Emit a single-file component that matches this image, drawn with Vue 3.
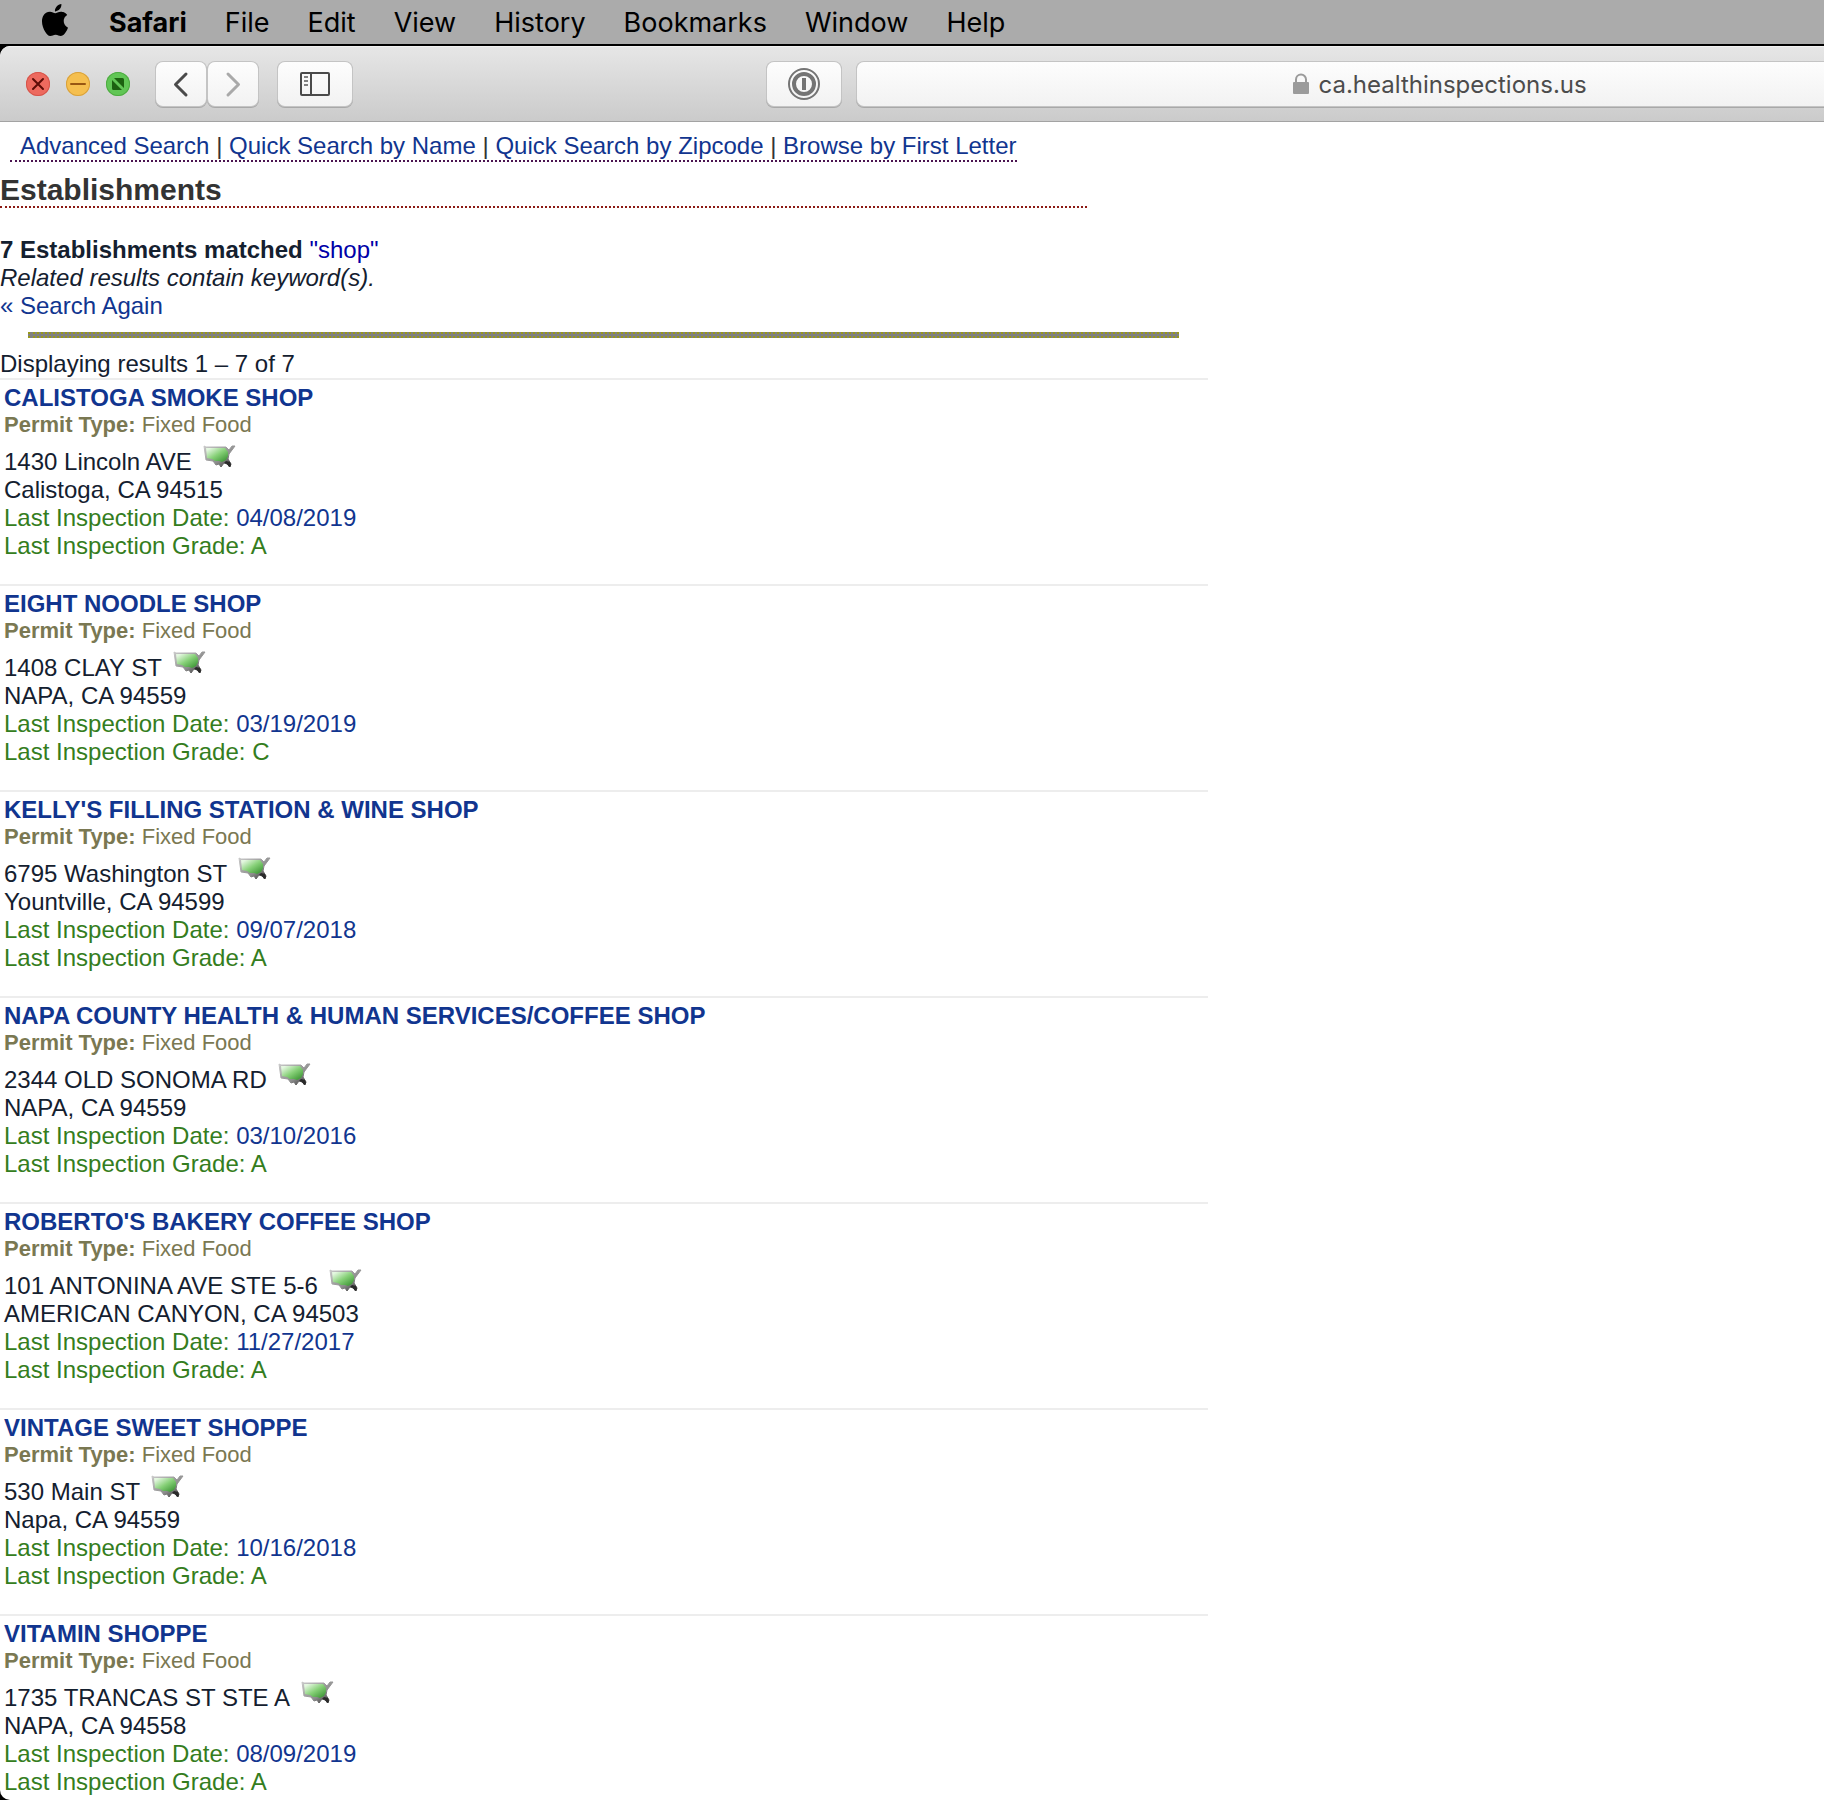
<script setup>
const menus = ['File', 'Edit', 'View', 'History', 'Bookmarks', 'Window', 'Help']

const searches = [
  'Advanced Search',
  'Quick Search by Name',
  'Quick Search by Zipcode',
  'Browse by First Letter',
]

const establishments = [
  { name: 'CALISTOGA SMOKE SHOP', street: '1430 Lincoln AVE', city: 'Calistoga, CA 94515', date: '04/08/2019', grade: 'A' },
  { name: 'EIGHT NOODLE SHOP', street: '1408 CLAY ST', city: 'NAPA, CA 94559', date: '03/19/2019', grade: 'C' },
  { name: "KELLY'S FILLING STATION & WINE SHOP", street: '6795 Washington ST', city: 'Yountville, CA 94599', date: '09/07/2018', grade: 'A' },
  { name: 'NAPA COUNTY HEALTH & HUMAN SERVICES/COFFEE SHOP', street: '2344 OLD SONOMA RD', city: 'NAPA, CA 94559', date: '03/10/2016', grade: 'A' },
  { name: "ROBERTO'S BAKERY COFFEE SHOP", street: '101 ANTONINA AVE STE 5-6', city: 'AMERICAN CANYON, CA 94503', date: '11/27/2017', grade: 'A' },
  { name: 'VINTAGE SWEET SHOPPE', street: '530 Main ST', city: 'Napa, CA 94559', date: '10/16/2018', grade: 'A' },
  { name: 'VITAMIN SHOPPE', street: '1735 TRANCAS ST STE A', city: 'NAPA, CA 94558', date: '08/09/2019', grade: 'A' },
]
</script>

<template>
  <div class="desktop">
    <header class="menubar">
      <button class="menu apple" aria-label="Apple menu">
        <svg width="32" height="32" viewBox="0 0 24 24" aria-hidden="true">
          <path d="M12.152 6.896c-.948 0-2.415-1.078-3.96-1.04-2.04.027-3.91 1.183-4.961 3.014-2.117 3.675-.546 9.103 1.519 12.09 1.013 1.454 2.208 3.09 3.792 3.039 1.52-.065 2.09-.987 3.935-.987 1.831 0 2.35.987 3.96.948 1.637-.026 2.676-1.48 3.676-2.948 1.156-1.688 1.636-3.325 1.662-3.415-.039-.013-3.182-1.221-3.22-4.857-.026-3.04 2.48-4.494 2.597-4.559-1.429-2.09-3.623-2.324-4.39-2.376-2-.156-3.675 1.09-4.61 1.09zM15.53 3.83c.843-1.012 1.4-2.427 1.245-3.83-1.207.052-2.662.805-3.532 1.818-.78.896-1.454 2.338-1.273 3.714 1.338.104 2.715-.688 3.559-1.701" />
        </svg>
      </button>
      <button class="menu app">Safari</button>
      <button v-for="m in menus" :key="m" class="menu">{{ m }}</button>
    </header>

    <div class="window">
      <div class="toolbar">
        <div class="lights">
          <button class="light close" aria-label="Close">
            <svg viewBox="0 0 24 24" aria-hidden="true"><path d="M7 7l10 10M17 7L7 17" stroke="#5e0c08" stroke-width="2" stroke-linecap="round" /></svg>
          </button>
          <button class="light minimize" aria-label="Minimize">
            <svg viewBox="0 0 24 24" aria-hidden="true"><path d="M5 12h14" stroke="#985712" stroke-width="2" stroke-linecap="round" /></svg>
          </button>
          <button class="light zoom" aria-label="Full screen">
            <svg viewBox="0 0 24 24" aria-hidden="true"><path d="M8 6h8.500q1.500 0 1.500 1.500V16zM6 8v8.500q0 1.500 1.500 1.500H16z" fill="#1c6110" /></svg>
          </button>
        </div>
        <div class="history">
          <button class="tool narrow" aria-label="Back">
            <svg width="50" height="44" viewBox="0 0 50 44" aria-hidden="true"><path d="M30 12L19.500 22.500L30 33" fill="none" stroke="#4a4a4a" stroke-width="3" stroke-linecap="round" stroke-linejoin="round" /></svg>
          </button>
          <button class="tool narrow" aria-label="Forward">
            <svg width="50" height="44" viewBox="0 0 50 44" aria-hidden="true"><path d="M20 12L30.500 22.500L20 33" fill="none" stroke="#a9a9a9" stroke-width="3" stroke-linecap="round" stroke-linejoin="round" /></svg>
          </button>
        </div>
        <button class="tool" aria-label="Show sidebar">
          <svg width="30" height="24" viewBox="0 0 30 24" fill="none" aria-hidden="true">
            <rect x="1" y="1" width="28" height="22" rx="1" stroke="#4a4a4a" stroke-width="2" />
            <path d="M11 1v22" stroke="#4a4a4a" stroke-width="2" />
            <path d="M4 5h4M4 9h4M4 13h4" stroke="#808080" stroke-width="2" />
          </svg>
        </button>
        <button class="tool password" aria-label="Password manager">
          <svg width="32" height="32" viewBox="0 0 32 32" fill="none" stroke="#747474" aria-hidden="true">
            <circle cx="16" cy="16" r="15" stroke-width="2" />
            <circle cx="16" cy="16" r="10" stroke-width="4" />
            <path d="M16 10v12" stroke-width="4" />
          </svg>
        </button>
        <label class="location">
          <svg width="16" height="22" viewBox="0 0 16 22" aria-hidden="true">
            <path d="M3 11V6.500a5 5 0 0 1 10 0V11" fill="none" stroke="#9b9b9b" stroke-width="2" />
            <rect y="9" width="16" height="12" rx="1" fill="#9b9b9b" />
          </svg>
          <input type="text" aria-label="Address" value="ca.healthinspections.us" />
        </label>
      </div>

      <main class="page">
        <nav class="searches">
          <template v-for="(s, i) in searches" :key="s"><template v-if="i"> | </template><a href="#">{{ s }}</a></template>
        </nav>
        <h1>Establishments</h1>

        <div class="summary">
          <div><b>7 Establishments matched</b> <span class="keyword">"shop"</span></div>
          <div><i>Related results contain keyword(s).</i></div>
          <div><a href="#">« Search Again</a></div>
        </div>
        <hr />
        <div>Displaying results 1 – 7 of 7</div>

        <ul class="results">
          <li v-for="e in establishments" :key="e.name">
            <a class="name" href="#">{{ e.name }}</a>
            <div class="permit"><b>Permit Type:</b> Fixed Food</div>
            <div class="street">
              <span>{{ e.street }}</span>
              <a href="#" aria-label="Map">
                <svg width="34" height="26" viewBox="0 0 34 26" aria-hidden="true">
                  <defs>
                    <linearGradient id="land" x1="0" y1="0" x2="1" y2="1">
                      <stop offset="0.100" stop-color="#e4f7e0" />
                      <stop offset="0.500" stop-color="#86d077" />
                      <stop offset="1" stop-color="#2f8a29" />
                    </linearGradient>
                    <linearGradient id="coast" x1="0" y1="0" x2="1" y2="1">
                      <stop offset="0" stop-color="#c8c8c8" />
                      <stop offset="0.600" stop-color="#8c8c8c" />
                      <stop offset="1" stop-color="#222" />
                    </linearGradient>
                  </defs>
                  <path d="M2 3L4 17L11 18L14 22L17 21L19 24L22 20L25 21L28 24L29 21L26 16L27 11L30 7L33 3L30 3L27 7L24 4L4 4Z" fill="url(#coast)" stroke="url(#coast)" stroke-width="1" stroke-linejoin="round" />
                  <path d="M4 5L23 5L26 9L26 13L24 17L20 19L17 18L13 18L10 16L5 15Z" fill="url(#land)" />
                  <path d="M24 18L28 19L29 22L27 24L25 21L22 20Z" fill="#2a2a2a" />
                </svg>
              </a>
            </div>
            <div>{{ e.city }}</div>
            <div class="inspection">Last Inspection Date: <a href="#">{{ e.date }}</a></div>
            <div class="inspection">Last Inspection Grade: <span>{{ e.grade }}</span></div>
          </li>
        </ul>
      </main>
    </div>
  </div>
</template>

<style>
body {
  margin: 0;
  background: #000;
}
</style>

<style scoped>
.desktop {
  display: flex;
  flex-direction: column;
  min-height: 100vh;
  overflow-x: hidden;
}

button {
  margin: 0;
  padding: 0;
  border: 0;
  background: none;
  font: inherit;
  color: inherit;
}

svg {
  display: block;
}

.menubar {
  display: flex;
  align-items: center;
  gap: 38px;
  height: 44px;
  padding-left: 39px;
  margin-bottom: 2px;
  background: #ababab;
  color: #000;
  font: 27px/44px Inter, "Liberation Sans", sans-serif;
}

.menu {
  padding-top: 2px;
}

.menu.apple {
  padding: 0 0 4px;
}

.menu.app {
  font-weight: 700;
}

.window {
  display: flex;
  flex-direction: column;
  flex: 1;
  overflow: hidden;
  border-radius: 10px 0 0 10px;
  background: #fff;
}

.toolbar {
  box-sizing: border-box;
  display: flex;
  align-items: center;
  height: 76px;
  padding-left: 26px;
  border-top: 1px solid #f3f3f3;
  border-bottom: 1px solid #a3a3a3;
  background: linear-gradient(#e6e6e6, #cbcbcb);
}

.lights {
  display: flex;
  gap: 16px;
  margin-right: 26px;
}

.light {
  width: 24px;
  height: 24px;
  border-radius: 50%;
}

.close {
  background: #ed6a5f;
  box-shadow: inset 0 0 0 1px #d5554b;
}

.minimize {
  background: #f5bf4f;
  box-shadow: inset 0 0 0 1px #d8a13c;
}

.zoom {
  background: #61c655;
  box-shadow: inset 0 0 0 1px #4fab42;
}

.light svg {
  width: 24px;
  height: 24px;
}

.history {
  display: flex;
  gap: 2px;
  margin-right: 20px;
}

.tool,
.location {
  box-sizing: border-box;
  display: flex;
  align-items: center;
  justify-content: center;
  width: 74px;
  height: 44px;
  border-radius: 7px;
  background: linear-gradient(#fdfdfd, #f2f2f2);
  box-shadow: 0 0 0 1px #c4c4c4, 0 1px 0 1px #a8a8a8;
}

.tool {
  flex: none;
}

.tool.narrow {
  width: 50px;
}

.tool.password {
  margin: 0 16px 0 415px;
}

.location {
  flex: 1;
  gap: 10px;
  min-width: 0;
  padding-left: 198px;
  border-radius: 7px 0 0 7px;
}

.location input {
  width: 268px;
  padding: 2px 0 0;
  border: 0;
  background: none;
  color: #4c4c4c;
  font: 24px/30px Inter, "Liberation Sans", sans-serif;
}

.page {
  padding-top: 10px;
  color: #14202f;
  font: 24px/28px "Liberation Sans", Arial, sans-serif;
}

a {
  color: #11358f;
  text-decoration: none;
}

.searches {
  width: fit-content;
  margin-left: 10px;
  padding-left: 10px;
  border-bottom: 2px dotted #4b1450;
  color: #333;
}

h1 {
  max-width: 1087px;
  margin: 12px 0 0;
  border-bottom: 2px dotted #8c1a14;
  color: #333;
  font-size: 30px;
  line-height: 32px;
}

.summary {
  margin-top: 28px;
}

.keyword {
  color: #0000a8;
}

hr {
  max-width: 1147px;
  height: 2px;
  margin: 12px 28px;
  border: 2px dotted #99991a;
  background: #808080;
}

.results {
  max-width: 1208px;
  margin: 0;
  padding: 0;
  list-style: none;
}

.results li {
  padding: 4px 4px 24px;
  border-top: 2px solid #ededed;
}

.results li:last-child {
  padding-bottom: 4px;
}

.name {
  display: block;
  font-weight: 700;
}

.permit {
  margin-bottom: 10px;
  color: #7a7852;
  font-size: 22px;
  line-height: 26px;
}

.street {
  display: flex;
  gap: 10px;
  height: 28px;
}

.street a {
  margin-top: -5px;
}

.inspection {
  color: #347d20;
}

.inspection a {
  color: #11358f;
}
</style>
